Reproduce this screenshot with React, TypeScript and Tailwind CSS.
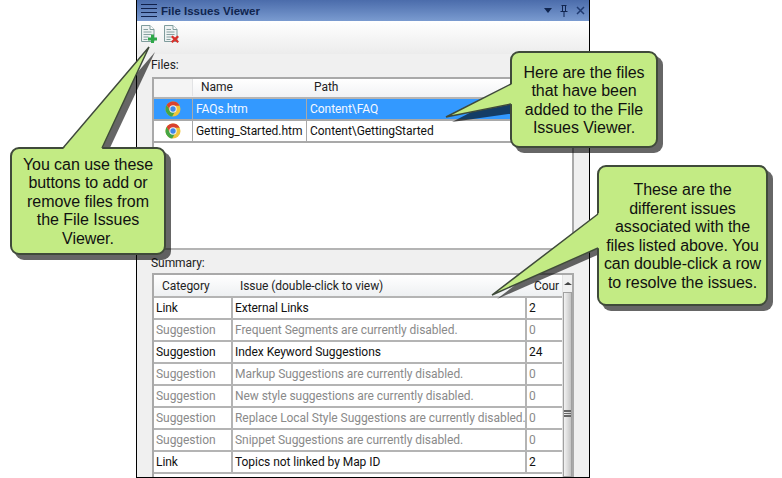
const fileRows = [
  { name: "FAQs.htm", path: "Content\\FAQ", selected: true },
  { name: "Getting_Started.htm", path: "Content\\GettingStarted", selected: false },
];

const issueRows = [
  { category: "Link", issue: "External Links", count: "2", on: true },
  { category: "Suggestion", issue: "Frequent Segments are currently disabled.", count: "0", on: false },
  { category: "Suggestion", issue: "Index Keyword Suggestions", count: "24", on: true },
  { category: "Suggestion", issue: "Markup Suggestions are currently disabled.", count: "0", on: false },
  { category: "Suggestion", issue: "New style suggestions are currently disabled.", count: "0", on: false },
  { category: "Suggestion", issue: "Replace Local Style Suggestions are currently disabled.", count: "0", on: false },
  { category: "Suggestion", issue: "Snippet Suggestions are currently disabled.", count: "0", on: false },
  { category: "Link", issue: "Topics not linked by Map ID", count: "2", on: true },
];

function ChromeIcon() {
  return (
    <svg width="16" height="16" viewBox="0 0 16 16" aria-hidden="true">
      <circle cx="8" cy="8" r="7.500" fill="#eec53c" />
      <path d="M8 .5a7.500 7.500 0 0 0-6.400 3.600L5 9.500 8 4.800h6.700A7.500 7.500 0 0 0 8 .5z" fill="#d9412f" />
      <path d="M1.600 4.100A7.500 7.500 0 0 0 7.200 15.500l3.200-5.700L5 9.500z" fill="#45a544" />
      <circle cx="8" cy="8" r="3.700" fill="#f4f4f4" />
      <circle cx="8" cy="8" r="2.700" fill="#3f88e8" />
    </svg>
  );
}

function FileIcon({ add }: { add: boolean }) {
  return (
    <svg width="16" height="18" viewBox="0 0 16 18" aria-hidden="true">
      <path d="M.5.5h8.500l4 4v12H.5z" fill="#eef2f2" stroke="#7f9c9c" />
      <path d="M9 .5v4h4" fill="#fff" stroke="#7f9c9c" />
      <path d="M2.500 4.500h4.500M2.500 7h8M2.500 9.500h8M2.500 12h5M2.500 14.500h4" stroke="#86a0a0" />
      {add ? (
        <path d="M10 9.500h3v3h3v3h-3V18h-3v-2.500H7v-3h3z" fill="#2fa84a" />
      ) : (
        <path d="M8.500 10.500l2.500 2 2.500-2 1.500 1.500-2.300 2.200 2.300 2.300-1.500 1.500-2.500-2.200-2.500 2.200L7 16.500l2.300-2.300L7 12z" fill="#d8312b" />
      )}
    </svg>
  );
}

function FilesTable() {
  return (
    <div className="mx-[15px] h-[171px] border-2 border-b-0 border-[#a9a9a9] bg-white">
      <div className="flex h-[20px] items-center border-b-2 border-[#b4b4b4] bg-gradient-to-b from-white to-[#f1f2f4] pb-px text-[#222]">
        <div className="h-full w-[39px] border-r border-[#e2e3e5] bg-[#f4f4f4]" />
        <div className="w-[114px] pl-[8px]">Name</div>
        <div className="pl-[7px]">Path</div>
      </div>
      {fileRows.map((row) => (
        <div
          key={row.name}
          className={`flex h-[22px] items-center border-b-2 border-[#a9a9a9] ${row.selected ? "bg-[#3399ff] text-[#f4f8ff]" : "bg-white text-[#111]"}`}
        >
          <div className="flex h-full w-[39px] items-center justify-center border-r border-[#a9a9a9] pr-[1px]">
            <ChromeIcon />
          </div>
          <div className="flex h-full w-[114px] items-center border-r border-[#a9a9a9] pl-[3px]">{row.name}</div>
          <div className="pl-[3px]">{row.path}</div>
        </div>
      ))}
    </div>
  );
}

function SummaryTable() {
  return (
    <div className="mx-[15px] flex h-[204px] overflow-hidden border-2 border-b-0 border-[#a9a9a9] bg-white">
      <div className="w-[408px] shrink-0">
        <div className="flex h-[23px] items-center border-b-2 border-[#b4b4b4] bg-gradient-to-b from-white to-[#eef0f2] pt-[2px] text-[#222]">
          <div className="w-[79px] pl-[8px]">Category</div>
          <div className="w-[294px] pl-[7px]">Issue (double-click to view)</div>
          <div className="pl-[7px]">Cour</div>
        </div>
        {issueRows.map((row) => (
          <div
            key={row.issue}
            className={`flex h-[22px] items-center border-b-2 border-[#b4b4b4] ${row.on ? "text-[#111]" : "text-[#8a8a8a]"}`}
          >
            <div className="flex h-full w-[79px] items-center border-r-2 border-[#b4b4b4] pl-[2px]">{row.category}</div>
            <div className="flex h-full w-[294px] items-center whitespace-nowrap border-r-2 border-[#b4b4b4] pl-[2px]">{row.issue}</div>
            <div className="pl-[2px]">{row.count}</div>
          </div>
        ))}
      </div>
      <div className="flex w-[15px] flex-col items-center border-l border-[#e3e3e3] bg-[#f0f0f0]">
        <div className="flex h-[17px] items-center">
          <span className="h-0 w-0 border-x-[4px] border-b-[3px] border-x-transparent border-b-[#444]" />
        </div>
        <div className="flex w-full grow items-center justify-center border border-[#a0a0a0] bg-gradient-to-r from-[#f2f2f2] via-[#dcdcdc] to-[#c4c4c4]">
          <div className="mt-[58px] h-[7px] w-[7px] border-y-2 border-[#666] bg-[linear-gradient(#666,#666)] bg-[length:100%_1px] bg-center bg-no-repeat" />
        </div>
      </div>
    </div>
  );
}

function Callout({ className, lines }: { className: string; lines: string[] }) {
  return (
    <div
      className={`absolute flex flex-col items-center justify-center rounded-[9px] border-2 border-[#3f4a3a] bg-[#c3eb84] pt-[2px] text-center font-['Liberation_Sans',sans-serif] text-[16px] leading-[18.500px] text-[#111] shadow-[5px_5px_0_rgba(0,0,0,0.6)] ${className}`}
    >
      {lines.map((line) => (
        <span key={line}>{line}</span>
      ))}
    </div>
  );
}

export default function App() {
  return (
    <div className="relative h-[478px] w-[782px] overflow-hidden bg-white font-['Roboto','Liberation_Sans',sans-serif] text-[12px] leading-[17px] tracking-[-0.05px]">
      <div className="ml-[136px] flex h-[478px] w-[454px] flex-col border-x border-b border-black bg-[#f0f0f0]">
        <div className="flex h-[21px] items-center bg-gradient-to-b from-[#4b6cab] to-[#7a9bd0] pl-[4px] pr-[4px]">
          <div className="flex w-[16px] flex-col gap-[3px]">
            <span className="h-px bg-[#10204a]" />
            <span className="h-px bg-[#10204a]" />
            <span className="h-px bg-[#10204a]" />
            <span className="h-px bg-[#10204a]" />
          </div>
          <span className="ml-[4px] mt-[2px] font-['Liberation_Sans',sans-serif] text-[11.500px] font-bold tracking-normal text-[#10254f]">File Issues Viewer</span>
          <div className="ml-auto flex items-center gap-[8px] text-[#10254f]">
            <span className="h-0 w-0 border-x-[4px] border-t-[5px] border-x-transparent border-t-[#10254f]" />
            <svg width="8" height="12" viewBox="0 0 8 12" aria-hidden="true">
              <path d="M1.500.5h5M2.500.5v6M5.500.5v6M.5 6.500h7M4 6.500V12" fill="none" stroke="#10254f" />
            </svg>
            <svg width="9" height="9" viewBox="0 0 9 9" aria-hidden="true">
              <path d="M1 1l7 7M8 1L1 8" fill="none" stroke="#1f3a70" strokeWidth="1.500" />
            </svg>
          </div>
        </div>
        <div className="flex h-[33px] items-start gap-[7px] bg-gradient-to-b from-white to-[#ececec] pl-[4px] pt-[4px]">
          <FileIcon add />
          <FileIcon add={false} />
        </div>
        <div className="mt-[3px] h-[20px] pl-[14px] text-[#222]">Files:</div>
        <FilesTable />
        <div className="h-[25px] border-t-2 border-[#b4b4b4] pl-[14px] pt-[5px] text-[#222]">Summary:</div>
        <SummaryTable />
      </div>

      <svg className="absolute inset-0" width="782" height="478" aria-hidden="true">
        <path d="M155 52 L69 152 L108 152 Z" fill="#000" fillOpacity="0.6" />
        <path d="M452 122 L516 89 L516 113 Z" fill="#000" fillOpacity="0.6" />
        <path d="M497 299 L602 218 L602 253 Z" fill="#000" fillOpacity="0.6" />
      </svg>
      <Callout className="left-[10px] top-[147px] h-[108px] w-[156px]" lines={["You can use these", "buttons to add or", "remove files from", "the File Issues", "Viewer."]} />
      <Callout className="left-[510px] top-[51px] h-[97px] w-[148px]" lines={["Here are the files", "that have been", "added to the File", "Issues Viewer."]} />
      <Callout className="left-[597px] top-[165px] h-[141px] w-[171px]" lines={["These are the", "different issues", "associated with the", "files listed above. You", "can double-click a row", "to resolve the issues."]} />
      <svg className="absolute inset-0" width="782" height="478" aria-hidden="true">
        <path d="M149 47 L63 149 L102 149 Z" fill="#c3eb84" />
        <path d="M63 148 L149 47 L102 148" fill="none" stroke="#3f4a3a" strokeWidth="1.500" />
        <path d="M446 117 L512 84 L512 104 Z" fill="#c3eb84" />
        <path d="M511 84 L446 117 L511 104" fill="none" stroke="#3f4a3a" strokeWidth="1.500" />
        <path d="M492 295 L599 213 L599 248 Z" fill="#c3eb84" />
        <path d="M598 214 L492 295 L598 248" fill="none" stroke="#3f4a3a" strokeWidth="1.500" />
      </svg>
    </div>
  );
}
